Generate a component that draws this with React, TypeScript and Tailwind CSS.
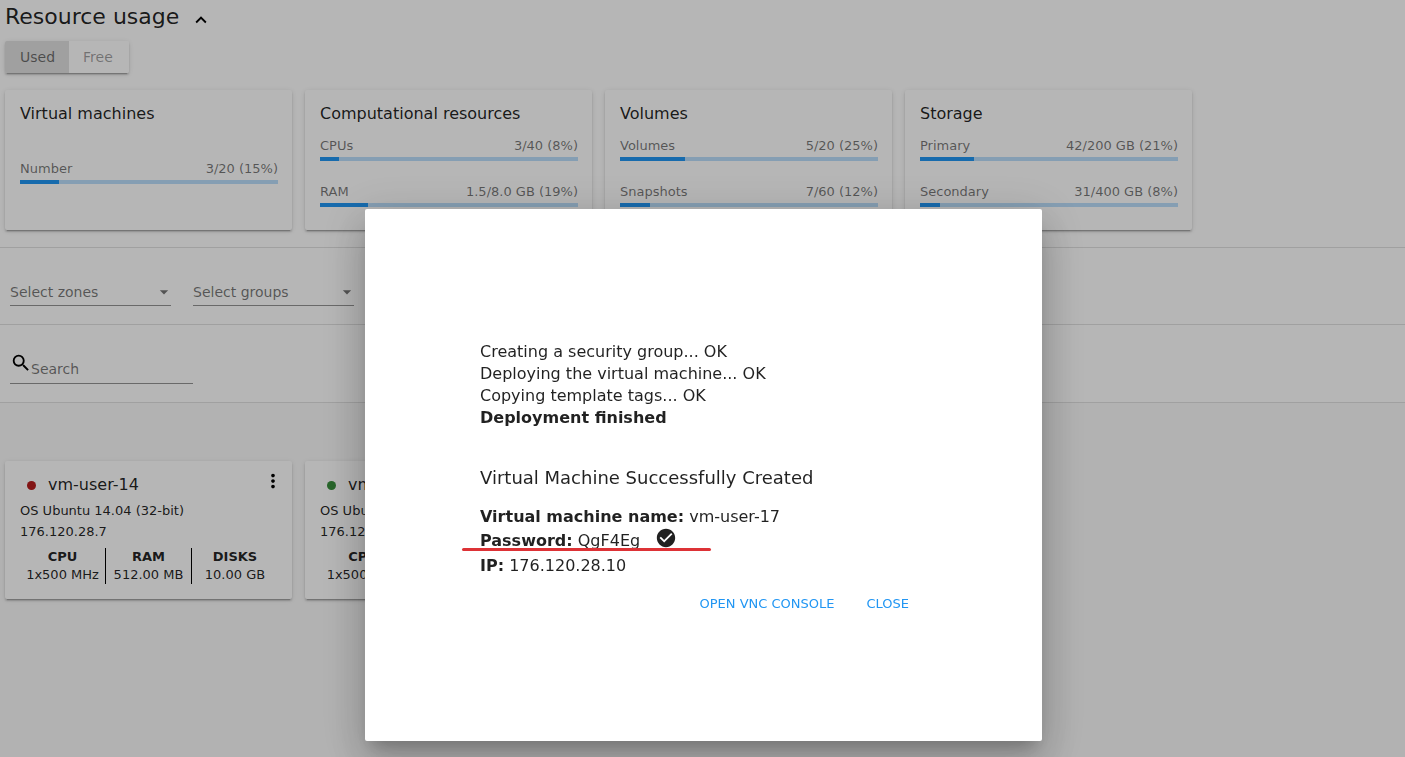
import React from "react";
import {
  MdArrowDropDown,
  MdCheckCircle,
  MdKeyboardArrowUp,
  MdMoreVert,
  MdSearch,
} from "react-icons/md";

type Usage = { label: string; value: string; percent: number };
type Group = { title: string; rows: Usage[] };
type Spec = { label: string; value: string };
type Machine = { name: string; ip: string; running: boolean; specs: Spec[] };

const groups: Group[] = [
  {
    title: "Virtual machines",
    rows: [{ label: "Number", value: "3/20 (15%)", percent: 15 }],
  },
  {
    title: "Computational resources",
    rows: [
      { label: "CPUs", value: "3/40 (8%)", percent: 7.5 },
      { label: "RAM", value: "1.5/8.0 GB (19%)", percent: 18.75 },
    ],
  },
  {
    title: "Volumes",
    rows: [
      { label: "Volumes", value: "5/20 (25%)", percent: 25 },
      { label: "Snapshots", value: "7/60 (12%)", percent: 11.67 },
    ],
  },
  {
    title: "Storage",
    rows: [
      { label: "Primary", value: "42/200 GB (21%)", percent: 21 },
      { label: "Secondary", value: "31/400 GB (8%)", percent: 7.75 },
    ],
  },
];

const machines: Machine[] = [
  {
    name: "vm-user-14",
    ip: "176.120.28.7",
    running: false,
    specs: [
      { label: "CPU", value: "1x500 MHz" },
      { label: "RAM", value: "512.00 MB" },
      { label: "DISKS", value: "10.00 GB" },
    ],
  },
  {
    name: "vm-user-15",
    ip: "176.120.28.8",
    running: true,
    specs: [{ label: "CPU", value: "1x500 MHz" }],
  },
];

const cardClass =
  "w-[287px] rounded-xs bg-white py-[15px] pr-[14px] pl-[15px] shadow-[0_3px_1px_-2px_rgba(0,0,0,0.2),0_2px_2px_0_rgba(0,0,0,0.14),0_1px_5px_0_rgba(0,0,0,0.12)]";

function UsageCard({ title, rows }: Group) {
  return (
    <section className={cardClass}>
      <h2 className="text-base leading-[18px]">{title}</h2>
      <div className="mt-[14px] mb-2 flex h-[70px] flex-col justify-center gap-[22px]">
        {rows.map((row) => (
          <div key={row.label}>
            <div className="flex justify-between text-[13px] leading-[18px] text-black/54">
              <span>{row.label}</span>
              <span>{row.value}</span>
            </div>
            <div className="mt-[2px] h-1 bg-[#bbdefb]">
              <div className="h-1 bg-[#2196f3]" style={{ width: `${row.percent}%` }} />
            </div>
          </div>
        ))}
      </div>
    </section>
  );
}

function Picker({ id, label }: { id: string; label: string }) {
  return (
    <div className="relative w-[161px]">
      <select
        id={id}
        aria-label={label}
        defaultValue=""
        className="h-7 w-full appearance-none border-b border-black/42 bg-transparent text-sm text-black/54 outline-none"
      >
        <option value="">{label}</option>
      </select>
      <MdArrowDropDown className="pointer-events-none absolute top-1 -right-[3px] size-5 text-black/54" />
    </div>
  );
}

function MachineCard({ name, ip, running, specs }: Machine) {
  return (
    <article className={cardClass}>
      <div className="flex h-[18px] items-center">
        <span
          className={
            running
              ? "ml-[7px] size-[9px] rounded-full bg-[#388e3c]"
              : "ml-[7px] size-[9px] rounded-full bg-[#b71c1c]"
          }
        />
        <h2 className="ml-3 flex-1 text-base leading-[18px]">{name}</h2>
        <button type="button" aria-label={`Actions for ${name}`} className="-mt-2 -mr-[6px] text-black">
          <MdMoreVert className="size-[22px]" />
        </button>
      </div>
      <div className="mt-[6px] text-[13px] leading-[21px]">
        <p>OS Ubuntu 14.04 (32-bit)</p>
        <p>{ip}</p>
      </div>
      <dl className="mt-[6px] grid grid-cols-3 divide-x divide-black text-center text-[13px] leading-[18px] whitespace-nowrap">
        {specs.map((spec) => (
          <div key={spec.label}>
            <dt className="font-bold">{spec.label}</dt>
            <dd>{spec.value}</dd>
          </div>
        ))}
      </dl>
    </article>
  );
}

function DeploymentDialog() {
  return (
    <div className="fixed inset-0 flex items-start justify-center bg-[rgba(0,0,0,0.288)] pt-[209px] pl-[2px]">
      <div
        role="dialog"
        aria-modal="true"
        aria-labelledby="dialog-title"
        className="w-full max-w-[677px] rounded-xs bg-white pt-[132px] pr-[117px] pb-[119px] pl-[115px] shadow-[0_11px_15px_-7px_rgba(0,0,0,0.2),0_24px_38px_3px_rgba(0,0,0,0.14),0_9px_46px_8px_rgba(0,0,0,0.12)]"
      >
        <div className="text-base leading-[22px]">
          <p>Creating a security group... OK</p>
          <p>Deploying the virtual machine... OK</p>
          <p>Copying template tags... OK</p>
          <p className="font-bold">Deployment finished</p>
        </div>
        <h2 id="dialog-title" className="mt-[37px] text-lg leading-6">
          Virtual Machine Successfully Created
        </h2>
        <div className="mt-[15px] text-base leading-6">
          <p>
            <b>Virtual machine name:</b> vm-user-17
          </p>
          <div className="relative flex h-6 items-center">
            <p>
              <b>Password:</b> QgF4Eg
            </p>
            <button type="button" aria-label="Save password" className="-mt-[6px] ml-[15px]">
              <MdCheckCircle className="size-[22px]" />
            </button>
            <span className="absolute bottom-[2px] -left-[18px] h-[3px] w-[249px] rounded-full bg-[#dd3236]" />
          </div>
          <p className="mt-px">
            <b>IP:</b> 176.120.28.10
          </p>
        </div>
        <div className="mt-2 flex justify-end text-[13px] leading-9 text-[#2196f3]">
          <button type="button" className="px-4">
            OPEN VNC CONSOLE
          </button>
          <button type="button" className="px-4">
            CLOSE
          </button>
        </div>
      </div>
    </div>
  );
}

export default function App() {
  return (
    <div className="min-h-screen bg-[#fafafa] font-['DejaVu_Sans',sans-serif] text-black/87">
      <main>
        <section className="border-b border-black/12 bg-white px-[5px] pb-[17px]">
          <div className="flex h-[33px] items-center">
            <h1 className="text-[22px] leading-8">Resource usage</h1>
            <button type="button" aria-label="Collapse resource usage" className="mt-[6px] ml-[11px] text-black">
              <MdKeyboardArrowUp className="size-[22px]" />
            </button>
          </div>
          <div className="mt-2 flex w-fit rounded-xs text-sm leading-8 shadow-[0_3px_1px_-2px_rgba(0,0,0,0.2),0_2px_2px_0_rgba(0,0,0,0.14),0_1px_5px_0_rgba(0,0,0,0.12)]">
            <button type="button" aria-pressed="true" className="rounded-l-xs bg-[#e0e0e0] pr-[14px] pl-[15px] text-black/54">
              Used
            </button>
            <button type="button" aria-pressed="false" className="rounded-r-xs bg-white pr-4 pl-[14px] text-black/38">
              Free
            </button>
          </div>
          <div className="mt-[17px] flex flex-wrap gap-[13px]">
            {groups.map((group) => (
              <UsageCard key={group.title} {...group} />
            ))}
          </div>
        </section>

        <section className="flex gap-[22px] border-b border-black/12 bg-white px-[10px] pt-[30px] pb-[18px]">
          <Picker id="zones" label="Select zones" />
          <Picker id="groups" label="Select groups" />
        </section>

        <section className="border-b border-black/12 bg-white px-[10px] pt-[27px] pb-[18px]">
          <label className="flex h-8 w-[183px] items-start border-b border-black/42">
            <MdSearch className="size-[22px] shrink-0 text-black" />
            <input
              type="text"
              aria-label="Search"
              placeholder="Search"
              className="mt-[7px] -ml-px h-5 w-full min-w-0 bg-transparent text-sm outline-none placeholder:text-black/54"
            />
          </label>
        </section>

        <section className="flex flex-wrap gap-[13px] px-[5px] pt-[58px] pb-4">
          {machines.map((machine) => (
            <MachineCard key={machine.name} {...machine} />
          ))}
        </section>
      </main>
      <DeploymentDialog />
    </div>
  );
}
